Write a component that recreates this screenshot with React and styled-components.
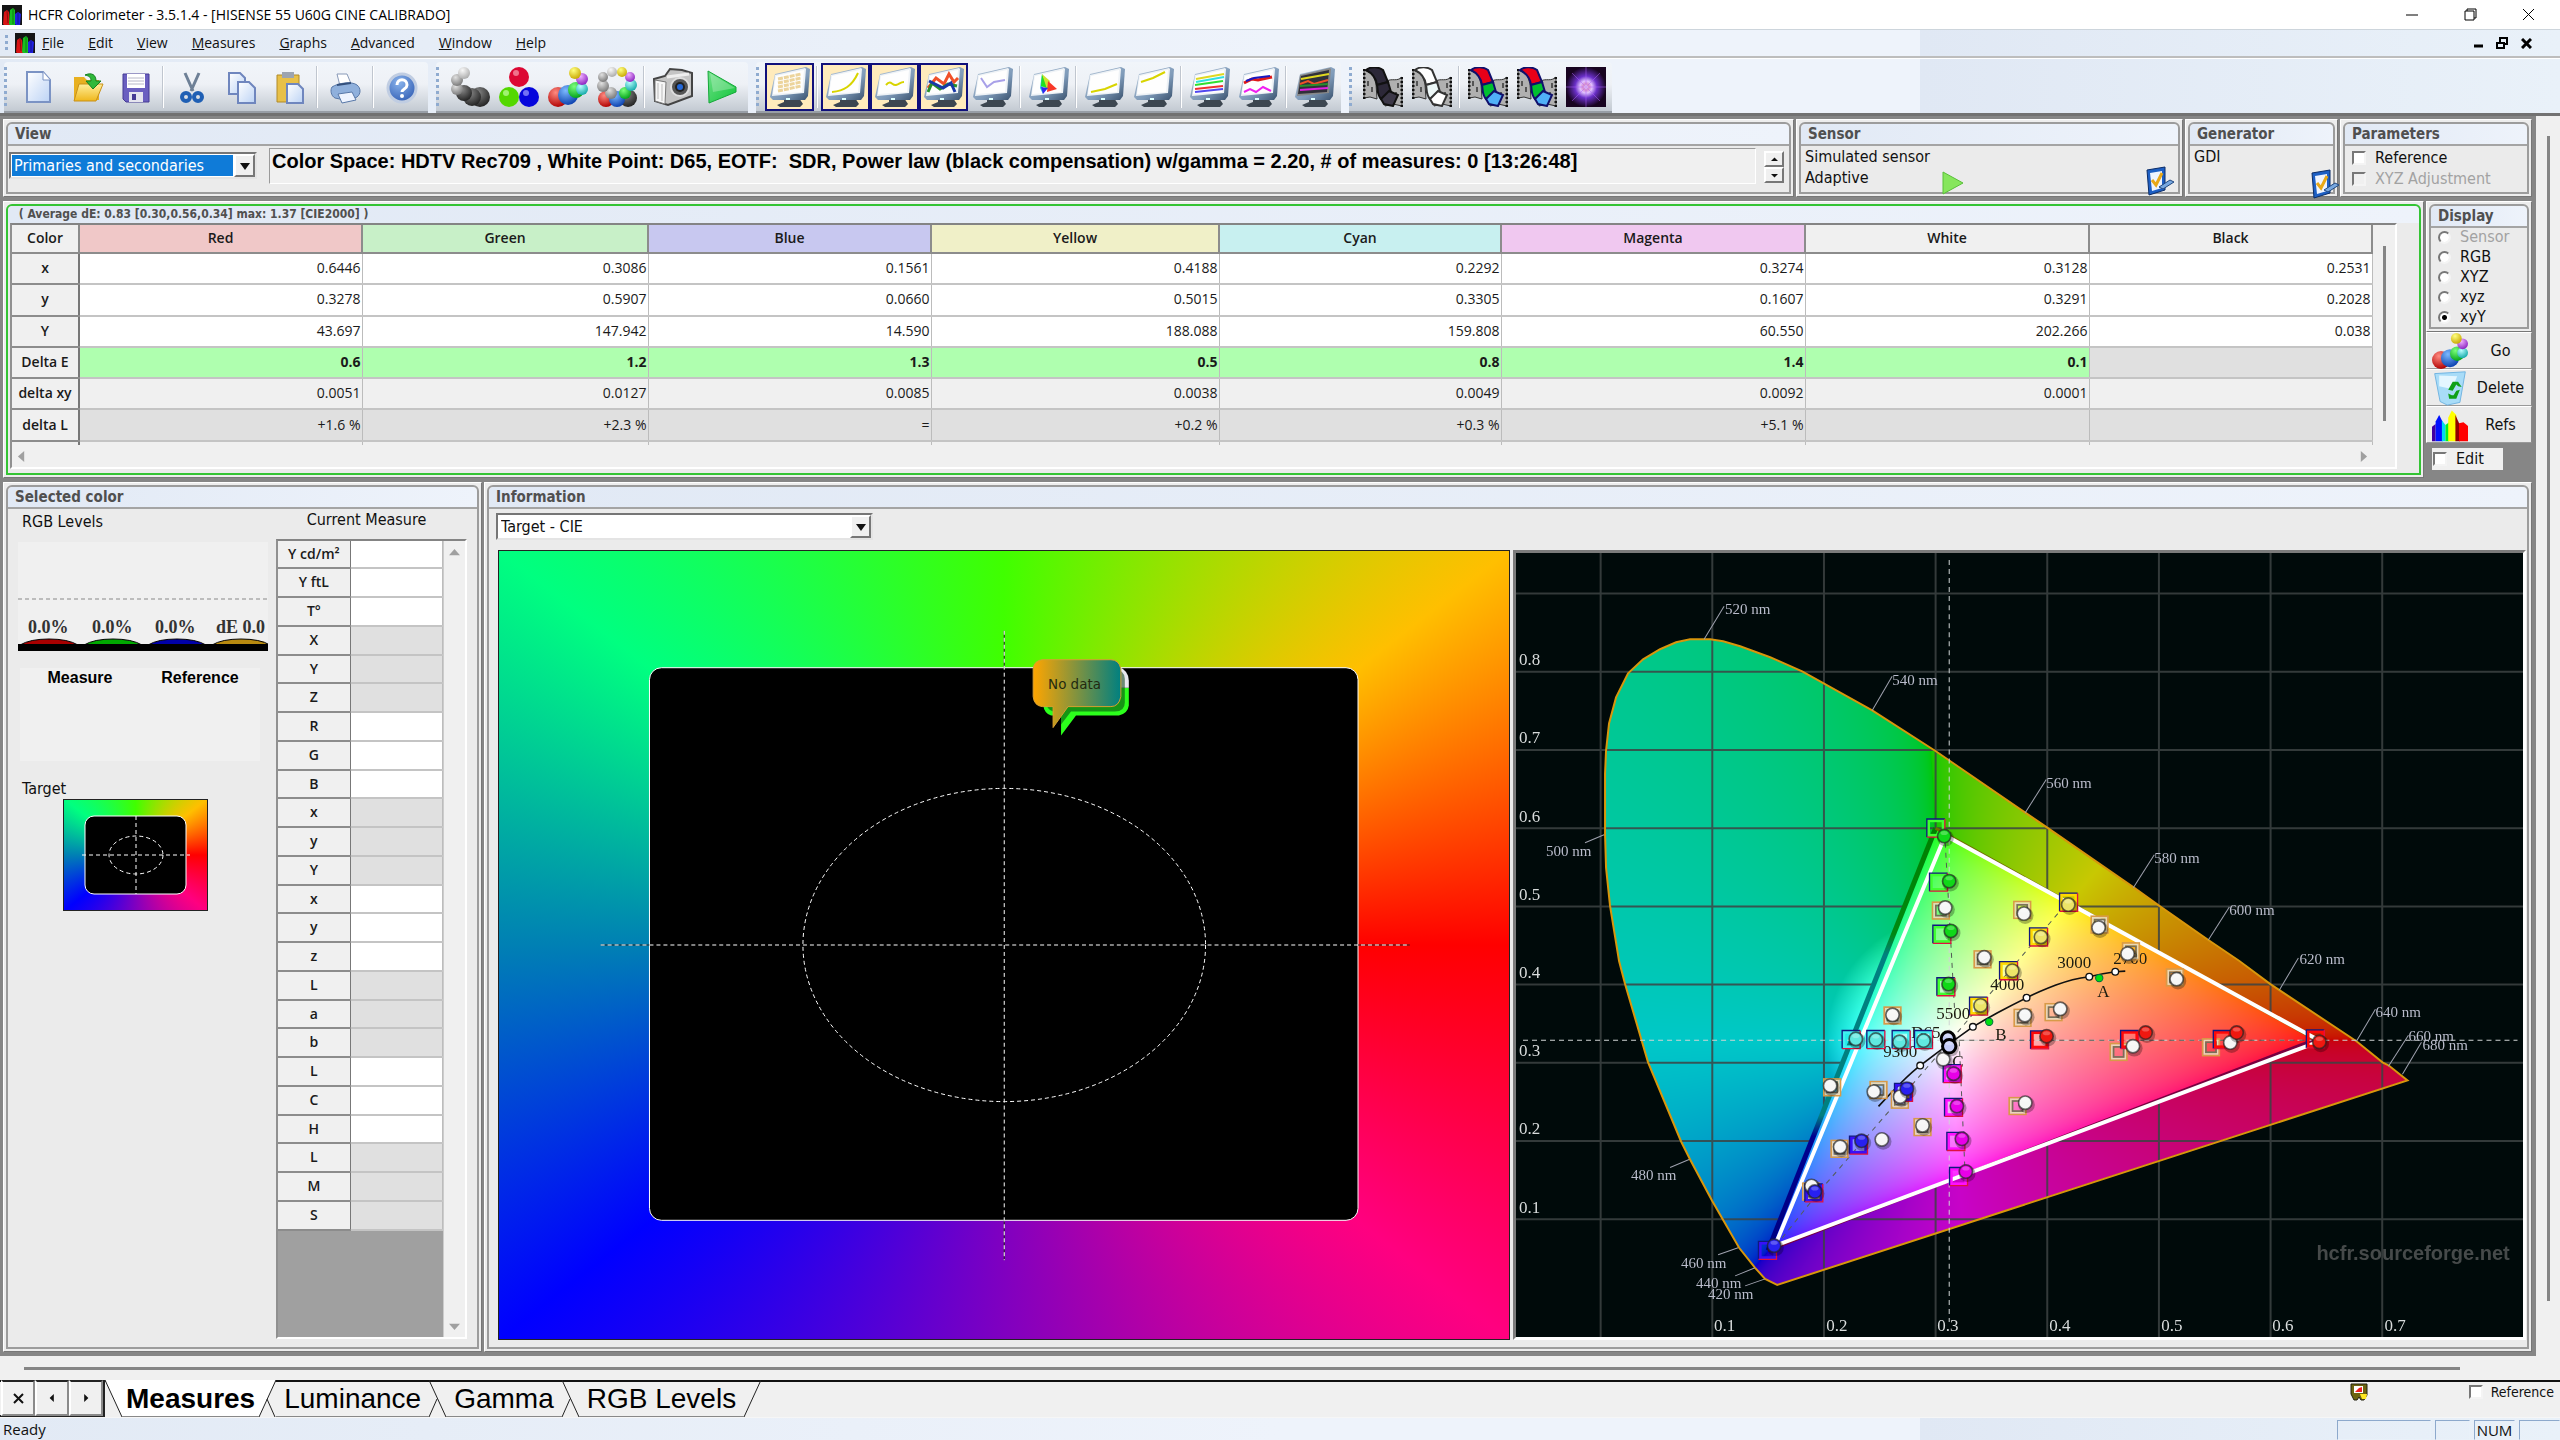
import React, { useLayoutEffect, useRef } from "react";
import styled, { createGlobalStyle, css } from "styled-components";

const ui = '"DejaVu Sans Condensed", "DejaVu Sans", sans-serif';
const segoe = '"Open Sans", "Noto Sans", sans-serif';
const arial = '"Liberation Sans", Arial, sans-serif';
const times = '"Liberation Serif", "Times New Roman", serif';

const band =
  "linear-gradient(to right, #e2eaf5 0, #eef3fb 50%, #eef3fb 75%, #e0e8f4 75%, #e9f1f9 100%)";

const GlobalStyle = createGlobalStyle`
  * { box-sizing: border-box; }
  body { margin: 0; background: #f0f0f0; color: #111; font: 16px ${ui}; }
  button, input, select { font: inherit; color: inherit; margin: 0; }
  svg { display: block; }
`;

/* ---------- window chrome ---------- */

const Window = styled.div`
  display: flex;
  flex-direction: column;
  min-height: 100vh;
`;

const TitleBar = styled.header`
  display: flex;
  align-items: center;
  height: 29px;
  padding: 0 3px 0 2px;
  background: #fff;
  color: #000;
  font: 14px/20px ${segoe};
`;

const Title = styled.h1`
  flex: 1;
  margin: 0;
  padding-left: 6px;
  font: inherit;
`;

const CaptionButton = styled.button`
  display: flex;
  align-items: center;
  justify-content: center;
  width: ${(p) => (p.$small ? "24px" : "58px")};
  height: 24px;
  padding: 0;
  border: 0;
  background: transparent;
`;

const MenuBar = styled.nav`
  display: flex;
  align-items: center;
  height: 29px;
  padding: 0 22px 0 5px;
  border-top: 1px solid #cdd5dc;
  border-bottom: 2px solid #bdbdbd;
  background: ${band};
`;

const MenuItem = styled.button`
  padding: 0 11px;
  margin-right: 2px;
  border: 0;
  background: transparent;
  font: 14px/20px ${segoe};
  &::first-letter { text-decoration: underline; }
`;

const Grip = styled.span`
  width: 3px;
  height: ${(p) => p.$h}px;
  background: repeating-linear-gradient(#8fabd0 0 3px, transparent 3px 6px);
`;

const MenuLogo = styled.span`
  padding: 0 0 0 7px;
  margin-right: -4px;
`;

const Spacer = styled.span`
  flex: 1;
`;

const ToolBars = styled.div`
  display: flex;
  gap: 8px;
  height: 55px;
  padding: 3px 4px 0;
  background: ${band};
  border-top: 1px solid #fff;
`;

const ToolGroup = styled.div`
  display: flex;
  align-items: center;
  padding: 0 2px 0 0;
  border-radius: 4px 4px 0 0;
  border-bottom: 2px solid #989ea6;
  background: linear-gradient(#f1f5fa 0, #eef1f6 45%, #c3cad2 100%);
`;

const ToolGrip = styled(Grip)`
  margin-right: 6px;
`;

const ToolButton = styled.button`
  display: grid;
  place-items: center;
  width: 49px;
  height: 48px;
  padding: 0;
  border: 2px solid ${(p) => (p.$on ? "#10107c" : "transparent")};
  background: ${(p) => (p.$on ? "#ffebbc" : "transparent")};
`;

const ToolSep = styled.span`
  width: 2px;
  height: 42px;
  margin: 0 3px 0 2px;
  background: linear-gradient(to right, #c0c6cf 50%, #fff 50%);
`;

/* ---------- form ---------- */

const Workspace = styled.main`
  display: grid;
  grid-template-columns: minmax(0, 1fr) 24px;
  grid-template-rows: minmax(0, 1fr) 24px;
  flex: 1;
  border-top: 3px solid #727272;
`;

const Form = styled.div`
  display: flex;
  flex-direction: column;
  gap: 4px;
  padding: 3px 4px 4px 3px;
  background: #868686;
`;

const Row = styled.div`
  display: flex;
  gap: 2px;
  ${(p) => p.$grow && "flex: 1;"}
`;

const PanelBox = styled.section`
  display: flex;
  min-width: 0;
  ${(p) => (p.$w ? `width: ${p.$w}px; flex: none;` : "flex: 1;")}
  padding: 2px;
  border: 1px solid;
  border-color: #fff #777 #777 #fff;
  background: #ededed;
`;

const PanelInner = styled.div`
  display: flex;
  flex-direction: column;
  flex: 1;
  min-width: 0;
  border: 2px solid ${(p) => p.$edge || "#9c9c9c"};
  border-radius: 6px 6px 0 0;
  background: #ebebeb;
`;

const PanelTitle = styled.h2`
  margin: 0;
  height: ${(p) => (p.$tight ? 17 : 22)}px;
  padding: 0 7px;
  border-bottom: ${(p) => (p.$tight ? 0 : 2)}px solid #a4a4a4;
  border-radius: 5px 5px 0 0;
  background: linear-gradient(to right, #e1e9f5, #eef3fb);
  color: #505050;
  font: bold ${(p) => (p.$tight ? 12 : 15)}px/${(p) => (p.$tight ? 17 : 20)}px ${ui};
  white-space: pre;
`;

function Panel({ title, width, edge, tight, children }) {
  return (
    <PanelBox $w={width}>
      <PanelInner $edge={edge}>
        <PanelTitle $tight={tight}>{title}</PanelTitle>
        {children}
      </PanelInner>
    </PanelBox>
  );
}

const ViewBody = styled.div`
  display: flex;
  flex: 1;
  padding: 2px 5px 8px 1px;
  gap: 12px;
`;

const SelectBox = styled.div`
  display: grid;
  width: ${(p) => p.$w}px;
  height: 27px;
  margin-top: ${(p) => (p.$top || 0)}px;
  border: 2px solid;
  border-color: #767676 #e4e4e4 #e4e4e4 #767676;
  background: #fff;
  > * { grid-area: 1 / 1; }
`;

const SelectField = styled.select`
  appearance: none;
  min-width: 0;
  margin: 1px 22px 1px 1px;
  padding: 0 2px;
  border: 0;
  border-radius: 0;
  background: ${(p) => (p.$active ? "#0f7bd8" : "#fff")};
  color: ${(p) => (p.$active ? "#fff" : "#111")};
  font: 16px/20px ${ui};
`;

const SelectArrow = styled.span`
  display: grid;
  place-items: center;
  justify-self: end;
  width: 21px;
  background: #f0f0f0;
  border: 2px solid;
  border-color: #fff #777 #777 #fff;
  pointer-events: none;
`;

const InfoLine = styled.p`
  flex: 1;
  min-width: 0;
  margin: 0;
  padding: 0 2px;
  border: 1px solid;
  border-color: #9a9a9a #fff #fff #9a9a9a;
  background: #f0f0f0;
  color: #000;
  font: bold 20px/24px ${arial};
  white-space: pre;
`;

const Spin = styled.div`
  display: flex;
  flex-direction: column;
  padding-top: 3px;
  margin-left: -4px;
`;

const SpinButton = styled.button`
  display: grid;
  place-items: center;
  width: 20px;
  height: 16px;
  padding: 0;
  border: 2px solid;
  border-color: #fff #777 #777 #fff;
  background: #f0f0f0;
`;

const DeviceBody = styled.div`
  display: grid;
  grid-template-columns: 1fr auto auto;
  align-items: end;
  flex: 1;
  padding: 0 5px 0 4px;
`;

const DeviceText = styled.p`
  margin: 0;
  align-self: start;
  font: 16px/21px ${ui};
`;

const IconButton = styled.button`
  width: ${(p) => p.$w}px;
  height: 30px;
  margin: 0 0 -${(p) => p.$drop || 4}px;
  padding: 0;
  border: 0;
  background: transparent;
`;

const PlayButton = styled(IconButton)`
  height: 26px;
  margin-right: 178px;
`;

const CheckList = styled.div`
  display: flex;
  flex-direction: column;
  padding: 1px 7px 3px;
`;

const Option = styled.label`
  display: flex;
  align-items: center;
  gap: ${(p) => p.$gap || 9}px;
  color: ${(p) => (p.$off ? "#a2a2a2" : "#111")};
  font: 16px/${(p) => p.$lh || 21}px ${ui};
`;

const Check = styled.input`
  appearance: none;
  width: 14px;
  height: 14px;
  border: 2px solid;
  border-color: #777 #f4f4f4 #f4f4f4 #777;
  background: ${(p) => (p.disabled ? "#f0f0f0" : "#fff")};
`;

const Radio = styled(Check)`
  width: 13px;
  height: 13px;
  border-radius: 50%;
  background: #fff;
  background-clip: padding-box;
  &:checked { background: radial-gradient(circle, #000 0 2px, #fff 3px); }
`;

/* ---------- measures table ---------- */

const TableBody = styled.div`
  display: flex;
  flex: 1;
  padding: 0 22px 4px 2px;
`;

const TableFrame = styled.div`
  display: grid;
  grid-template-columns: minmax(0, 1fr) 22px;
  grid-template-rows: 220px 22px;
  flex: 1;
  min-width: 0;
  border: 2px solid;
  border-color: #848484 #fff #fff #909090;
  background: #f0f0f0;
`;

const Clip = styled.div`
  overflow: hidden;
`;

const Table = styled.table`
  width: 100%;
  table-layout: fixed;
  border-collapse: collapse;
  font: 14px/20px ${segoe};
  color: #1a1a1a;
`;

const MainTable = styled(Table)`
  height: 248px;
`;

const HeadCell = styled.th`
  height: 28px;
  padding: 0 0 1px;
  border-right: 2px solid #8c8c8c;
  border-bottom: 2px solid #8c8c8c;
  background: ${(p) => p.$bg || "#f0f0f0"};
  font-weight: 600;
`;

const SideCell = styled.th`
  height: 31px;
  padding: 0 0 1px;
  border-right: 2px solid #777;
  border-bottom: 2px solid #8c8c8c;
  background: #f0f0f0;
  font-weight: 600;
`;

const Cell = styled.td`
  height: 31px;
  padding: 0 1px 1px 0;
  border-right: 1px solid #bcbcbc;
  border-bottom: 2px solid #c4c4c4;
  text-align: right;
  background: ${(p) => p.$bg};
  font-weight: ${(p) => (p.$strong ? 700 : 400)};
`;

const ScrollTrack = styled.div`
  display: flex;
  align-items: center;
  justify-content: ${(p) => p.$justify || "center"};
  ${(p) => p.$column && "flex-direction: column;"}
  padding: ${(p) => p.$pad || "0"};
  background: #f0f0f0;
`;

const Thumb = styled.span`
  align-self: ${(p) => (p.$v ? "stretch" : "center")};
  ${(p) => (p.$v ? "width: 3px;" : "height: 3px; flex: 1;")}
  background: #858585;
`;

const DisplayColumn = styled.div`
  display: flex;
  flex-direction: column;
  width: 106px;
`;

const RadioList = styled.div`
  display: flex;
  flex-direction: column;
  margin-top: -1px;
  padding: 0 0 1px 7px;
`;

const DisplayPanel = styled.div`
  display: flex;
  height: 131px;
`;

const SideButton = styled.button`
  display: grid;
  grid-template-columns: 39px 1fr;
  align-items: center;
  height: 37px;
  padding: 0 1px 0 5px;
  border: 1px solid;
  border-color: #fff #888 #999 #fff;
  background: #ebebeb;
  font: 16px/20px ${ui};
  text-align: center;
`;

const EditOption = styled(Option)`
  width: 71px;
  margin: 5px 0 0 6px;
  padding-left: 1px;
  background: #f0f0f0;
`;

/* ---------- selected colour ---------- */

const SelectedBody = styled.div`
  display: grid;
  grid-template-columns: 250px 191px;
  column-gap: 8px;
  flex: 1;
  padding: 0 10px 8px 10px;
`;

const LeftStack = styled.div`
  display: flex;
  flex-direction: column;
  align-items: flex-start;
`;

const Caption = styled.h3`
  margin: ${(p) => p.$m || "0"};
  padding: 0 4px;
  font: 16px/20px ${ui};
`;

const CompareBox = styled.div`
  display: grid;
  grid-template-columns: 1fr 1fr;
  width: 240px;
  height: 93px;
  margin: 17px 0 0 2px;
  background: #f0f0f0;
  color: #000;
  font: bold 16px/20px ${arial};
  text-align: center;
`;

const MeasureStack = styled.div`
  display: flex;
  flex-direction: column;
`;

const MeasureTitle = styled.h3`
  margin: 0 10px 9px 0;
  font: 16px/21px ${ui};
  text-align: center;
`;

const GridFrame = styled.div`
  display: grid;
  grid-template-columns: minmax(0, 1fr) 22px;
  flex: 1;
  border: 2px solid;
  border-color: #848484 #fff #fff #909090;
  background: #a0a0a0;
`;

const MeasureTable = styled(Table)`
  height: 690px;
`;

const MiniHead = styled(SideCell)`
  height: auto;
  border-right-width: 1px;
  line-height: 18px;
`;

const MiniCell = styled(Cell)`
  height: auto;
`;

const ArrowTrack = styled(ScrollTrack)`
  border-left: 1px solid #ccc;
`;

/* ---------- information ---------- */

const InfoBody = styled.div`
  display: flex;
  flex-direction: column;
  flex: 1;
  padding: 4px 1px 7px 7px;
  gap: 10px;
`;

const Views = styled.div`
  display: flex;
  flex: 1;
  gap: 3px;
  padding-left: 2px;
`;

const TargetView = styled.div`
  position: relative;
  ${(p) =>
    p.$mini
      ? css`
          width: 145px;
          height: 112px;
          margin: 0 0 0 45px;
        `
      : css`
          flex: 1014;
        `}
  border: 1px solid #222;
  background: conic-gradient(
    #40ff00 0deg, #ffbf00 52deg, #ff0000 90deg, #ff0080 128deg,
    #8000c0 180deg, #0000ff 232deg, #0080b4 270deg, #00ff80 308deg, #40ff00 360deg
  );
  > svg { position: absolute; inset: 0; width: 100%; height: 100%; }
`;

const CieView = styled.div`
  position: relative;
  flex: 1012;
  min-width: 0;
  border: 3px solid;
  border-color: #7c7c7c #fff #fff #7c7c7c;
  background: #000a0a;
  > * { position: absolute; inset: 0; width: 100%; height: 100%; }
  svg text { font-family: ${times}; }
`;

const Axis = styled.text`
  font-size: 17px;
  fill: #d8dcdc;
`;
const Wave = styled.text`
  font-size: 15px;
  fill: #b9bccb;
`;
const Kelvin = styled.text`
  font-size: 17px;
  fill: #1c1c10;
`;
const Credit = styled.text`
  && { font-family: ${arial}; }
  font-size: 20px;
  font-weight: bold;
  fill: #464a4a;
`;
const BubbleText = styled.text`
  font: 15px ${ui};
  fill: #222a10;
`;
const LevelText = styled.text`
  font: bold 18px ${times};
  fill: #333;
`;

/* ---------- bottom ---------- */

const Sheets = styled.nav`
  display: flex;
  height: 38px;
  padding-right: 6px;
  border-bottom: 1px solid #f6f6f6;
  background: linear-gradient(#111 0 2px, #f0f0f0 2px);
`;

const SheetArrow = styled.button`
  width: 34px;
  height: 36px;
  padding: 0;
  display: grid;
  place-items: center;
  border: 2px solid;
  border-color: #222 #8a8a8a #8a8a8a #fff;
  background: #f0f0f0;
`;

const ArrowSet = styled.div`
  display: flex;
  padding-left: 1px;
  border-right: 2px solid #222;
  border-bottom: 2px solid #222;
  height: 37px;
`;

const Sheet = styled.button`
  height: 37px;
  padding: 0 ${(p) => (p.$on ? 4 : 8)}px;
  border: 0;
  border-bottom: 1px solid #888;
  border-top: 2px solid ${(p) => (p.$on ? "#fff" : "#111")};
  background: ${(p) => (p.$on ? "#fff" : "transparent")};
  color: #000;
  font: ${(p) => (p.$on ? "bold" : "normal")} 28px/32px ${arial};
`;

const SheetTools = styled.div`
  display: flex;
  align-items: flex-start;
  gap: 100px;
  padding-top: 3px;
`;

const SmallOption = styled(Option)`
  font-size: 14px;
  line-height: 18px;
`;

const StatusBar = styled.footer`
  display: flex;
  gap: 4px;
  height: 22px;
  padding-left: 3px;
  background: ${band};
  font: 15px/22px ${segoe};
`;

const Pane = styled.span`
  width: ${(p) => p.$w}px;
  margin-top: 2px;
  border: 1px solid;
  border-color: #8da9cc #e9f1f9 #e9f1f9 #8da9cc;
  text-align: center;
  line-height: 19px;
`;

/* ---------- icons ---------- */

const Tri = ({ d, w = 10, h = 10, fill = "#111" }) => (
  <svg width={w} height={h} viewBox="0 0 10 10" preserveAspectRatio="none">
    <path d={d} fill={fill} />
  </svg>
);
const UP = "M0 8L5 1L10 8Z";
const DOWN = "M0 2L5 9L10 2Z";
const LEFT = "M8 0L1 5L8 10Z";
const RIGHT = "M2 0L9 5L2 10Z";

const Logo = ({ size = 20 }) => (
  <svg width={size} height={size} viewBox="0 0 20 20">
    <rect width="20" height="20" fill="#151515" />
    <path d="M1 19l1-12 3-2 2 2 1 13H2z" fill="#d81414" />
    <path d="M7 19l1-14 3-2 2 2 0 15H8z" fill="#18c020" />
    <path d="M13 19V9l3-2 3 2-1 11h-4z" fill="#2020e0" />
    <path d="M5 6l1 12M11 4v15M16 8v11" stroke="#000" opacity=".35" />
  </svg>
);

const Defs = () => (
  <svg width="0" height="0" style={{ position: "absolute" }} aria-hidden="true">
    <defs>
      {[
        ["grey", "#888", "#222"], ["lgrey", "#e0e0e0", "#777"], ["pale", "#f8f8f8", "#aaa"],
        ["red", "#ff8a80", "#b00000"], ["blue", "#7dbaff", "#0a3fae"], ["green", "#7cff7c", "#00a018"],
        ["cyan", "#b8ffff", "#10a8a8"], ["violet", "#f0b0ff", "#8a22c0"], ["gold", "#ffff80", "#c8a800"],
      ].map(([id, a, b]) => (
        <radialGradient key={id} id={"s-" + id} cx=".38" cy=".28" r=".75">
          <stop offset="0" stopColor={a} />
          <stop offset="1" stopColor={b} />
        </radialGradient>
      ))}
      <linearGradient id="bezel" x1="0" y1="0" x2="1" y2="1">
        <stop offset="0" stopColor="#b9c9da" />
        <stop offset=".6" stopColor="#7d99b8" />
        <stop offset="1" stopColor="#38506c" />
      </linearGradient>
      <linearGradient id="paper" x1="0" y1="0" x2="1" y2="1">
        <stop offset="0" stopColor="#fff" />
        <stop offset="1" stopColor="#bcd3f5" />
      </linearGradient>
      <linearGradient id="play" x1="0" y1="0" x2="1" y2="1">
        <stop offset="0" stopColor="#6fe088" />
        <stop offset="1" stopColor="#12c53a" />
      </linearGradient>
      <linearGradient id="folder" x1="0" y1="0" x2="0" y2="1">
        <stop offset="0" stopColor="#ffee9a" />
        <stop offset="1" stopColor="#efb71c" />
      </linearGradient>
      <radialGradient id="help" cx=".4" cy=".3" r=".8">
        <stop offset="0" stopColor="#8ab4ec" />
        <stop offset="1" stopColor="#2c58b0" />
      </radialGradient>
      <radialGradient id="nova">
        <stop offset="0" stopColor="#fff" />
        <stop offset=".15" stopColor="#d890c8" />
        <stop offset=".3" stopColor="#e0c0ff" />
        <stop offset=".55" stopColor="#6a30c8" />
        <stop offset="1" stopColor="#180420" />
      </radialGradient>
    </defs>
  </svg>
);

const Icon = ({ children, size = 40 }) => (
  <svg width={size} height={size} viewBox="0 0 40 40">{children}</svg>
);

const Balls = ({ list }) =>
  list.map(([x, y, r, c], i) => <circle key={i} cx={x} cy={y} r={r} fill={`url(#s-${c})`} />);

const colorBalls = [
  [10, 30, 10, "red"], [20, 28, 10, "blue"], [28, 23, 8, "green"], [34, 22, 6, "cyan"], [34, 12, 6, "violet"], [27, 6, 6, "gold"],
];

const Monitor = ({ children, dark }) => (
  <Icon>
    <path d="M14 31h15l4 6-3 3H10l-3-2 7-3z" fill="#3c4650" />
    <path d="M5 7L36 0l4 2-2 27-3 4H3l-3-3z" fill="url(#bezel)" />
    <path d="M5 8L35 1l1 1-2 24-32 3z" fill={dark ? "#888" : "#eef2f6"} />
    <path d="M6 9L34 3l-2 22-29 2z" fill={dark ? "#30303a" : "#fefefe"} />
    <path d="M16 32h4" stroke="#dff" strokeWidth="2" />
    {children}
  </Icon>
);

const L = ({ d, c, w = 2 }) => <path d={d} stroke={c} strokeWidth={w} fill="none" />;

const Film = ({ colors, stroke }) => (
  <Icon>
    <path d="M1 3l9 4 3 10 1 15-7-2-6 1z" fill="#b0b0b0" stroke="#333" />
    <path d="M24 14c5-3 10 1 15-4v29l-9-2-8 2z" fill="#b0b0b0" stroke="#333" />
    <path d="M1 2v30M39 10v30" stroke="#111" strokeWidth="3" strokeDasharray="2 2" />
    <path d="M5 14v5M9 20v5M35 16v5M33 25v5" stroke="#555" strokeWidth="2" />
    <path d="M3 3C8-1 16 0 20 3L25 15 14 18C13 11 9 6 3 3Z" fill={colors[0]} stroke={stroke} strokeWidth="2" />
    <path d="M14 18L25 15 28 25 18 32C14 28 15 23 14 18Z" fill={colors[1]} stroke={stroke} strokeWidth="2" />
    <path d="M18 32L26 24 35 28 30 39 21 37Z" fill={colors[2]} stroke={stroke} strokeWidth="2" />
  </Icon>
);

const icons = {
  New: <Icon><path d="M9 5h16l7 8v22H9z" fill="url(#paper)" stroke="#7b93c4" strokeWidth="2" /><path d="M25 5v8h7" fill="#fff" stroke="#7b93c4" /></Icon>,
  Open: <Icon><path d="M7 10h10l3 3h12v20H7z" fill="#e8b020" /><path d="M12 17h24l-7 17H7z" fill="url(#folder)" stroke="#c89018" /><path d="M18 8c7-3 11 0 11 6h5l-8 8-7-8h5c0-4-2-5-6-6z" fill="#2fb83a" stroke="#168020" /></Icon>,
  Save: <Icon><path d="M7 7h26v28H10l-3-3z" fill="#6a5fc0" stroke="#453a94" /><path d="M11 7h18v14H11z" fill="#fff" /><path d="M12 11h16M12 14h16M12 17h16" stroke="#b8b8c8" /><path d="M13 25h14v10H13z" fill="#e4e4ee" /><path d="M16 27h4v6h-4z" fill="#453a94" /></Icon>,
  Cut: <Icon><path d="M13 6l8 18M27 6l-8 18" stroke="#6e8096" strokeWidth="3" /><circle cx="14" cy="30" r="4" fill="none" stroke="#1f5fb4" strokeWidth="4" /><circle cx="26" cy="30" r="4" fill="none" stroke="#1f5fb4" strokeWidth="4" /></Icon>,
  Copy: <Icon><path d="M8 6h11l5 5v16H8z" fill="url(#paper)" stroke="#6f86be" strokeWidth="2" /><path d="M17 15h11l6 6v15H17z" fill="url(#paper)" stroke="#6f86be" strokeWidth="2" /></Icon>,
  Paste: <Icon><path d="M7 8h22v27H7z" fill="#e8c048" stroke="#b08a28" /><path d="M12 5h12v6H12z" fill="#9ca4b0" /><path d="M17 17h11l5 5v14H17z" fill="url(#paper)" stroke="#6f86be" strokeWidth="2" /></Icon>,
  Print: <Icon><path d="M11 7h10l5 12H14z" fill="#fff" stroke="#8899b8" /><path d="M6 20c6-4 20-6 25-2 4 3 4 9 0 12l-8 4-14-3c-4-2-5-8-3-11z" fill="#8fb0dc" stroke="#5878a8" /><path d="M11 18l14-2" stroke="#34507c" strokeWidth="2" /><path d="M12 27l14-2 4 8-14 3z" fill="#eef4ff" stroke="#5878a8" /></Icon>,
  Help: <Icon><circle cx="20" cy="21" r="14" fill="url(#help)" stroke="#c0cde2" strokeWidth="3" /><path d="M15 18c0-7 10-7 10 0 0 4-5 4-5 7" fill="none" stroke="#fff" strokeWidth="3" /><circle cx="20" cy="29" r="2" fill="#fff" /></Icon>,
  Greys: <Icon><Balls list={[[30, 30, 10, "grey"], [22, 30, 9, "grey"], [14, 26, 8, "grey"], [7, 22, 6, "lgrey"], [7, 13, 6, "lgrey"], [14, 6, 6, "pale"]]} /></Icon>,
  Primaries: <Icon><circle cx="20" cy="10" r="10" fill="#dc0834" /><circle cx="10" cy="30" r="10" fill="#54d800" /><circle cx="30" cy="30" r="10" fill="#0606dc" /><circle cx="17" cy="6" r="3" fill="#f8a0b0" opacity=".7" /><circle cx="7" cy="26" r="3" fill="#c0ffa0" opacity=".7" /><circle cx="27" cy="26" r="3" fill="#a0a0ff" opacity=".7" /></Icon>,
  Secondaries: <Icon><Balls list={colorBalls} /></Icon>,
  All: <Icon><Balls list={[[9, 32, 8, "red"], [31, 31, 9, "grey"], [20, 32, 8, "blue"], [14, 26, 6, "lgrey"], [28, 26, 6, "green"], [6, 19, 6, "lgrey"], [34, 18, 6, "cyan"], [6, 10, 5, "lgrey"], [33, 10, 5, "violet"], [15, 5, 5, "pale"], [25, 5, 5, "gold"]]} /></Icon>,
  Capture: <Icon><path d="M1 12l11-3 5-7 12 1 10 3v23l-24 9-13-4z" fill="#c4c4c4" stroke="#444" strokeWidth="2" /><path d="M2 13l11 2-1 22L2 34z" fill="#f6f6f6" stroke="#777" /><path d="M5 16v16M9 17v17" stroke="#bbb" /><path d="M14 10l22-3" stroke="#eee" strokeWidth="3" /><circle cx="27" cy="20" r="9" fill="#555" stroke="#ddd" strokeWidth="2" /><circle cx="27" cy="20" r="5" fill="#222" /><circle cx="27" cy="20" r="3" fill="#2468d8" /></Icon>,
  Run: <Icon><path d="M6 4l28 16v5L7 36z" fill="url(#play)" stroke="#14a838" /><path d="M8 6l25 15-22 4z" fill="#fff" opacity=".25" /></Icon>,
  Table: <Monitor>{[11, 15, 19, 23].map((y) => <path key={y} d={`M8 ${y + 1}l23-5`} stroke="#ecd49c" strokeWidth="3" strokeDasharray="5 1" />)}</Monitor>,
  Luminance: <Monitor><L d="M6 25c12-1 20-6 26-19" c="#d8d400" /></Monitor>,
  GammaView: <Monitor><L d="M11 18c5-6 6 1 10 0s4-3 8-3" c="#d8d400" /></Monitor>,
  RGB: <Monitor><L d="M4 21l8-10 8 6 5-10 5 8 4-4" c="#f05028" w={3} /><L d="M4 25l4-9 8 6 8-5 9 2" c="#28902c" w={3} /><L d="M5 14l8 4 6 3 8-5 4 9" c="#1838a8" w={3} /></Monitor>,
  Temp: <Monitor><L d="M8 11l6 9 7-5 11-2" c="#a8a0e8" /></Monitor>,
  CIE: <Monitor><path d="M13 7l-2 14 3 6z" fill="#20c8e0" /><path d="M13 7l-1 12 8 3z" fill="#20e020" /><path d="M13 7l8 7-3 8z" fill="#d0e030" /><path d="M19 14l9 8-10 3z" fill="#f83828" /><path d="M12 20l7 1-5 6z" fill="#3028f0" /></Monitor>,
  Near0: <Monitor><L d="M6 25l14-3 12-5" c="#d8d400" /></Monitor>,
  Near100: <Monitor><L d="M7 15l12-4 12-6" c="#d8d400" /></Monitor>,
  Sat: <Monitor><L d="M6 12l28-5" c="#e0d820" /><L d="M6 15l28-5" c="#30e0e0" /><L d="M5 18l28-4" c="#30e030" /><L d="M5 22l28-3" c="#f03030" /><L d="M5 25l28-3" c="#5048f0" /></Monitor>,
  SatShift: <Monitor><L d="M5 16l8-4 6 1 14-3" c="#e01818" w={3} /><L d="M7 14l8-3 16-2" c="#1818c0" /><L d="M5 25l6-3 6 3 7-5 8 4" c="#f020f0" /></Monitor>,
  Combo: <Monitor dark><L d="M6 12l28-5" c="#e0d820" /><L d="M5 17l8-3 6 3 14-4" c="#f05028" /><L d="M5 19l28-2" c="#28902c" /><L d="M5 23l28-2" c="#e020e0" /></Monitor>,
  FilmDark: <Film colors={["#2c2838", "#2c2838", "#3c3848"]} stroke="#111" />,
  FilmLight: <Film colors={["#fff", "#eef8f8", "#fff"]} stroke="#333" />,
  FilmRgb: <Film colors={["#e80018", "#00c030", "#50b0f8"]} stroke="#10106c" />,
  FilmRgb2: <Film colors={["#e80018", "#00c030", "#50b0f8"]} stroke="#10106c" />,
  Nova: <Icon><rect width="40" height="40" fill="#180420" /><rect width="40" height="40" fill="url(#nova)" /><path d="M20 0v40M0 20h40M6 6l28 28M34 6L6 34" stroke="#b060ff" opacity=".5" /></Icon>,
};

const toolbars = [
  ["New", "Open", "Save", "|", "Cut", "Copy", "Paste", "|", "Print", "|", "Help"],
  ["Greys", "Primaries", "Secondaries", "All", "|", "Capture", "Run"],
  ["Table", "|", "Luminance", "GammaView", "RGB", "Temp", "|", "CIE", "|", "Near0", "Near100", "|", "Sat", "SatShift", "|", "Combo"],
  ["FilmDark", "FilmLight", "|", "FilmRgb", "FilmRgb2", "Nova"],
];
const pressed = ["Table", "Luminance", "GammaView", "RGB"];

const SetupIcon = () => (
  <svg width="30" height="30" viewBox="0 0 30 30">
    <path d="M2 4l18-3v23L4 29z" fill="#1d5fc4" stroke="#0a2c68" />
    <path d="M5 7l12-2v17L7 25z" fill="#eef4ff" />
    <path d="M7 14l4 5 6-12" fill="none" stroke="#e8a818" strokeWidth="3" />
    <path d="M14 21l11-7 4 2-11 7z" fill="#78a8e0" stroke="#204880" />
  </svg>
);

/* ---------- data ---------- */

const columns = [
  ["Red", "#f0c8c8", 283], ["Green", "#c8f0c8", 286], ["Blue", "#c8c8f0", 283], ["Yellow", "#f0f0c8", 288],
  ["Cyan", "#c8f0f0", 282], ["Magenta", "#f0c8f0", 304], ["White", "#f0f0f0", 284], ["Black", "#f0f0f0", 283],
];

const rows = [
  ["x", "#fff", "0.6446 0.3086 0.1561 0.4188 0.2292 0.3274 0.3128 0.2531"],
  ["y", "#fff", "0.3278 0.5907 0.0660 0.5015 0.3305 0.1607 0.3291 0.2028"],
  ["Y", "#fff", "43.697 147.942 14.590 188.088 159.808 60.550 202.266 0.038"],
  ["Delta E", "#afffaf", "0.6 1.2 1.3 0.5 0.8 1.4 0.1 "],
  ["delta xy", "#f0f0f0", "0.0051 0.0127 0.0085 0.0038 0.0049 0.0092 0.0001 "],
  ["delta L", "#e0e0e0", "+1.6_% +2.3_% = +0.2_% +0.3_% +5.1_%  "],
  ["", "#f0f0f0", "       "],
];

const measureRows = ["Y cd/m²", "Y ftL", "T°", "X", "Y", "Z", "R", "G", "B", "x", "y", "Y", "x", "y", "z", "L", "a", "b", "L", "C", "H", "L", "M", "S"];

/* ---------- chromaticity chart ---------- */

const locus = [
  [1778, 1283], [1766, 1277], [1756, 1266], [1740, 1246], [1713, 1199], [1691, 1158], [1682, 1140], [1649, 1061], [1626, 983],
  [1620, 960], [1611, 905], [1607, 867], [1606, 834], [1606, 773], [1607, 750], [1610, 723], [1617, 697], [1629, 673],
  [1644, 659], [1661, 649], [1677, 642], [1691, 639], [1711, 639], [1724, 641], [1741, 646], [1771, 657], [1803, 671],
  [1873, 710], [1937, 751], [2026, 812], [2048, 827], [2135, 887], [2160, 905], [2209, 939], [2240, 960], [2271, 983],
  [2280, 989], [2357, 1040], [2383, 1061], [2389, 1064], [2408, 1079],
];
const ORIGIN = [1517, 553];
const SIZE = [1007, 782];
const px = (x) => 1601.6 + 1116 * x;
const py = (y) => 1295.5 - 780 * y;

const primaries = [[0.64, 0.33], [0.3, 0.6], [0.15, 0.06]];
const whitePoint = [0.3127, 0.329];

function rgbOf(x, y) {
  const z = 1 - x - y;
  return [
    Math.max(0, 3.2406 * x - 1.5372 * y - 0.4986 * z),
    Math.max(0, -0.9689 * x + 1.8758 * y + 0.0415 * z),
    Math.max(0, 0.0557 * x - 0.204 * y + 1.057 * z),
  ];
}

/* Distance along the ray from the white point at which the gamut edge is crossed. */
function edgeHit(dx, dy) {
  let best = Infinity;
  for (let i = 0; i < 3; i++) {
    const a = primaries[i];
    const b = primaries[(i + 1) % 3];
    const ex = b[0] - a[0];
    const ey = b[1] - a[1];
    const det = dx * ey - dy * ex;
    if (Math.abs(det) < 1e-12) continue;
    const ax = a[0] - whitePoint[0];
    const ay = a[1] - whitePoint[1];
    const s = (ax * ey - ay * ex) / det;
    const t = (ax * dy - ay * dx) / det;
    if (s > 0 && t >= -1e-9 && t <= 1 + 1e-9 && s < best) best = s;
  }
  return best;
}

function paintLocus(canvas) {
  const ctx = canvas.getContext("2d");
  const img = ctx.createImageData(SIZE[0], SIZE[1]);
  for (let j = 0; j < SIZE[1]; j++) {
    for (let i = 0; i < SIZE[0]; i++) {
      let x = (i + ORIGIN[0] - 1601.6) / 1116;
      let y = (1295.5 - j - ORIGIN[1]) / 780;
      const dx = x - whitePoint[0];
      const dy = y - whitePoint[1];
      const s = edgeHit(dx, dy);
      let top = 255;
      let glow = 0;
      if (s < 1) {
        x = whitePoint[0] + dx * s;
        y = whitePoint[1] + dy * s;
        top = 200;
        glow = Math.max(0, 1 - Math.hypot(dx * 1116, dy * 780) / 124);
      }
      const c = rgbOf(x, y);
      const m = Math.max(c[0], c[1], c[2]);
      const k = (j * SIZE[0] + i) * 4;
      for (let n = 0; n < 3; n++) {
        img.data[k + n] = top * Math.pow(c[n] / m, 1 / 2.2) + glow * 220;
      }
      img.data[k + 3] = 255;
    }
  }
  ctx.putImageData(img, 0, 0);
  ctx.globalCompositeOperation = "destination-in";
  ctx.beginPath();
  locus.forEach(([x, y]) => ctx.lineTo(x - ORIGIN[0], y - ORIGIN[1]));
  ctx.closePath();
  ctx.fill();
}

const waves = [
  [520, 1726, 614, 1705, 639, 1725, 606], [540, 1893, 685, 1873, 710, 1893, 676], [560, 2047, 787, 2026, 812, 2047, 779],
  [580, 2155, 862, 2134, 887, 2155, 854], [600, 2230, 914, 2209, 939, 2230, 906], [620, 2300, 963, 2280, 989, 2299, 957],
  [640, 2376, 1016, 2357, 1040, 2376, 1008], [660, 2409, 1040, 2389, 1065, 2409, 1034], [680, 2423, 1049, 2403, 1073, 2422, 1041],
  [500, 1547, 855, 1605, 834, 1586, 842], [480, 1632, 1178, 1690, 1158, 1671, 1166], [460, 1682, 1266, 1739, 1246, 1719, 1253],
  [440, 1697, 1286, 1756, 1266, 1736, 1274], [420, 1709, 1297, 1766, 1277, 1746, 1284],
];

const kelvins = [
  ["3000", 2058, 967], ["2700", 2114, 963], ["A", 2098, 996], ["4000", 1991, 989], ["5500", 1937, 1018],
  ["B", 1996, 1039], ["9300", 1884, 1056], ["D65", 1912, 1037], ["C", 1953, 1066],
];

/* Target squares and measured points, in thirds of a pixel from the chart's inner corner. */
const squares = {
  none: [[575, 329], [819, 327], [1051, 371], [1145, 451], [1277, 529], [700, 475], [430, 643], [820, 650], [913, 633], [1108, 752], [1385, 738], [249, 858], [388, 866], [452, 895], [520, 977], [271, 1042], [805, 914], [186, 1170]],
  "#40ff30": [[560, 82], [568, 244], [578, 400], [590, 557]],
  "#ffd800": [[958, 304], [868, 408], [778, 509], [688, 615]],
  "#ff0808": [[871, 716], [1141, 715], [1419, 715], [1698, 713]],
  "#40f0f0": [[306, 715], [380, 715], [456, 715], [523, 715]],
  "#ff10ff": [[609, 817], [613, 918], [620, 1020], [628, 1125]],
  "#3810f8": [[463, 873], [328, 1031], [194, 1174], [55, 1346]],
};
const points = {
  "#f6f6f6": [[582, 774], [588, 320], [824, 338], [1048, 380], [1135, 458], [1282, 534], [705, 469], [430, 641], [827, 642], [933, 623], [1151, 735], [1443, 724], [243, 853], [374, 871], [453, 886], [520, 972], [273, 1036], [398, 1014], [828, 904], [187, 1153]],
  "#10d818": [[585, 106], [600, 241], [605, 390], [598, 549]],
  "#ece468": [[957, 311], [875, 408], [789, 509], [694, 613]],
  "#f01810": [[892, 705], [1189, 694], [1462, 694], [1710, 722]],
  "#60e8e0": [[320, 713], [380, 715], [451, 722], [523, 718]],
  "#e800e8": [[613, 817], [623, 914], [638, 1012], [650, 1110]],
  "#2820f0": [[473, 862], [337, 1018], [197, 1170], [75, 1332]],
  "#c4ccf8": [[596, 712], [600, 735]],
};

const tri = (pts) => "M" + pts.map(([x, y]) => `${px(x)} ${py(y)}`).join("L") + "Z";

function Cie() {
  const ref = useRef(null);
  useLayoutEffect(() => paintLocus(ref.current), []);
  const tenths = [0, 1, 2, 3, 4, 5, 6, 7];
  return (
    <CieView>
      <canvas ref={ref} width={SIZE[0]} height={SIZE[1]} />
      <svg viewBox={`${ORIGIN[0]} ${ORIGIN[1]} ${SIZE[0]} ${SIZE[1]}`} preserveAspectRatio="none">
        <defs>
          <clipPath id="outside">
            <path clipRule="evenodd" d={`M1500 500H2560V1400H1500Z${tri(primaries)}`} />
          </clipPath>
          <linearGradient id="edge" x1="0" y1="0" x2="0" y2="1">
            <stop offset="0" stopColor="#008000" />
            <stop offset=".25" stopColor="#008810" />
            <stop offset=".3" stopColor="#008080" />
            <stop offset=".68" stopColor="#008080" />
            <stop offset=".73" stopColor="#000090" />
            <stop offset="1" stopColor="#000080" />
          </linearGradient>
        </defs>
        <g clipPath="url(#outside)" stroke="#3d4444" strokeWidth="2" opacity=".85">
          {tenths.map((n) => <path key={n} d={`M${px(n / 10)} 553V1335`} />)}
          {[1, 2, 3, 4, 5, 6, 7, 8, 9].map((n) => <path key={n} d={`M1517 ${py(n / 10)}H2524`} />)}
        </g>
        <path d={"M" + locus.join("L") + "Z"} fill="none" stroke="#d8960c" strokeWidth="2" />
        <path d={`M${px(0.3)} ${py(0.6)}L${px(0.15)} ${py(0.06)}`} stroke="url(#edge)" strokeWidth="5" />
        <path d={`M${px(0.15)} ${py(0.06)}L${px(0.64)} ${py(0.33)}`} stroke="#780040" strokeWidth="3" />
        <path d={`M${px(0.3)} ${py(0.6)}L${px(0.64)} ${py(0.33)}`} stroke="#707000" strokeWidth="3" />
        <path d={tri([[0.3086, 0.5907], [0.6446, 0.3278], [0.1561, 0.066]])} fill="none" stroke="#fff" strokeWidth="4" />
        <path d="M1950 560V1320M1524 1039H2518" stroke="#cfd4d4" strokeWidth="1" strokeDasharray="5 4" />
        <g stroke="#555c55" strokeWidth="1" strokeDasharray="5 5" fill="none">
          <path d="M1946 842L1956 1020M1960 1040L1966 1175M2065 905L1955 1035L1820 1190L1780 1240M1960 1039H2310" />
        </g>
        {waves.map(([nm, x, y, x1, y1, x2, y2]) => (
          <g key={nm}>
            <path d={`M${x1} ${y1}L${x2} ${y2}`} stroke="#a0a3b0" />
            <Wave x={x} y={y}>{nm} nm</Wave>
          </g>
        ))}
        {[1, 2, 3, 4, 5, 6, 7].map((n) => <Axis key={n} x={Math.round(px(n / 10)) + 2} y="1329">0.{n}</Axis>)}
        {[1, 2, 3, 4, 5, 6, 7, 8].map((n) => <Axis key={n} x="1520" y={Math.round(py(n / 10)) - 7}>0.{n}</Axis>)}
        {kelvins.map(([t, x, y]) => <Kelvin key={t} x={x} y={y}>{t}</Kelvin>)}
        <g transform="translate(1750 800) scale(.3333)">
          <path
            d="M388 915Q420 880 455 845T513 793Q560 757 600 728T671 677Q705 657 745 635T832 590Q870 571 920 552T1020 527Q1060 517 1098 512L1128 510"
            fill="none" stroke="#111" strokeWidth="5"
          />
          {[[513, 793], [671, 677], [832, 590], [1020, 527], [1098, 512]].map(([x, y]) => (
            <circle key={x} cx={x} cy={y} r="10" fill="#fff" stroke="#111" strokeWidth="4" />
          ))}
          {[[720, 662], [1050, 531]].map(([x, y]) => (
            <circle key={x} cx={x} cy={y} r="11" fill="#00e010" stroke="#064" strokeWidth="3" />
          ))}
          {Object.entries(squares).map(([c, list]) =>
            list.map(([x, y]) =>
              c === "none" ? (
                <g key={x + "," + y} fill="none">
                  <rect x={x - 25} y={y - 25} width="50" height="50" stroke="#d89a48" strokeWidth="5" />
                  <rect x={x - 20} y={y - 20} width="40" height="40" stroke="#e8d8b8" strokeWidth="5" />
                  <rect x={x - 15} y={y - 15} width="30" height="30" stroke="#77705a" strokeWidth="5" />
                </g>
              ) : (
                <g key={x + "," + y} fill="none">
                  <rect x={x - 22} y={y - 22} width="44" height="44" stroke={c} strokeWidth="9" />
                  <path d={`M${x - 27} ${y + 27}V${y - 27}H${x + 27}`} stroke="#101880" strokeWidth="4" />
                  <path d={`M${x - 27} ${y + 27}H${x + 27}V${y - 27}`} stroke="#e01040" strokeWidth="4" />
                </g>
              )
            )
          )}
          {Object.entries(points).map(([c, list]) =>
            list.map(([x, y]) => (
              <g key={x + "," + y}>
                <circle cx={x + 4} cy={y + 6} r="25" fill="#000" opacity=".28" />
                <circle
                  cx={x} cy={y} r="20" fill={c}
                  stroke={c === "#c4ccf8" ? "#000" : "#222"} strokeOpacity={c === "#c4ccf8" ? 1 : 0.65}
                  strokeWidth={c === "#c4ccf8" ? 9 : 5}
                />
                <ellipse cx={x} cy={y - 9} rx="11" ry="6" fill="#fff" opacity=".25" />
              </g>
            ))
          )}
        </g>
        <Credit x="2317" y="1258">hcfr.sourceforge.net</Credit>
      </svg>
    </CieView>
  );
}

function Target({ mini }) {
  if (mini)
    return (
      <TargetView $mini>
        <svg viewBox="0 0 143 110" preserveAspectRatio="none">
          <rect x="21" y="16" width="101" height="78" rx="9" stroke="#fff" />
          <g fill="none" stroke="#fff" strokeDasharray="4 3">
            <path d="M72 16V94M18 55H126" />
            <ellipse cx="72" cy="55" rx="27" ry="19" />
          </g>
        </svg>
      </TargetView>
    );
  return (
    <TargetView>
      <svg viewBox="0 0 1013 790" preserveAspectRatio="none">
        <defs>
          <linearGradient id="bubble">
            <stop offset="0" stopColor="#ffa500" />
            <stop offset="1" stopColor="#008080" />
          </linearGradient>
        </defs>
        <rect x="151" y="117" width="711" height="554" rx="12" stroke="#fff" strokeWidth="1" />
        <path d="M507 80V117M102 395H151M862 395H914M507 671V711" stroke="#222" fill="none" />
        <g fill="none" stroke="#fff" strokeDasharray="4 3">
          <path d="M507 80V711M102 395H914" />
          <ellipse cx="507" cy="395" rx="202" ry="157" />
        </g>
        <path d="M546 154H620V137H632V155Q631 163 622 165H579L564 185V165H554Q547 163 546 154Z" fill="#2cff1c" />
        <path d="M622 116Q632 120 632 130V137H622Z" fill="#e8e8f0" />
        <path d="M549 150H618V118Q628 120 628 128V152Q628 161 618 161H574L564 174V161H556Q549 159 549 150Z" fill="#063c10" opacity=".55" />
        <path d="M545 109H614Q622 109 624 118V146Q622 156 614 156H571L556 177V156H545Q537 155 536 146V118Q537 110 545 109Z" fill="url(#bubble)" stroke="#d8a030" />
        <BubbleText x="551" y="138">No data</BubbleText>
      </svg>
    </TargetView>
  );
}

function Levels() {
  return (
    <svg width="250" height="109" viewBox="0 0 250 109">
      <rect width="250" height="109" fill="#f0f0f0" />
      <path d="M0 57H250" stroke="#888" strokeDasharray="4 3" />
      {[["#a80000", 2, "0.0%", 10], ["#00a800", 66, "0.0%", 74], ["#0000a8", 130, "0.0%", 137], ["#b88a10", 194, "dE 0.0", 198]].map(([c, x, t, tx]) => (
        <g key={x}>
          <path d={`M${x} 103Q${x + 10} 97 ${x + 29} 97T${x + 58} 103Z`} fill={c} stroke="#000" />
          <LevelText x={tx} y="91">{t}</LevelText>
        </g>
      ))}
      <rect y="102" width="250" height="7" />
    </svg>
  );
}

/* ---------- sheet separators ---------- */

const Edge = ({ d, fill }) => (
  <svg width="17" height="37" viewBox="0 0 17 37">
    <path d="M0 1H17" stroke="#111" strokeWidth="2" />
    {fill && <path d={fill} fill="#fff" />}
    <path d={d} stroke="#222" fill="none" strokeWidth="1" />
  </svg>
);

export default function App() {
  return (
    <Window>
      <GlobalStyle />
      <Defs />
      <TitleBar>
        <Logo />
        <Title>HCFR Colorimeter - 3.5.1.4 - [HISENSE 55 U60G CINE CALIBRADO]</Title>
        <CaptionButton aria-label="Minimize"><svg width="12" height="12"><path d="M0 6h12" stroke="#000" /></svg></CaptionButton>
        <CaptionButton aria-label="Restore"><svg width="13" height="13"><path d="M1 3h9v9H1zM3 3V1h9v9h-2" fill="none" stroke="#000" /></svg></CaptionButton>
        <CaptionButton aria-label="Close"><svg width="13" height="13"><path d="M1 1l11 11M12 1L1 12" stroke="#000" /></svg></CaptionButton>
      </TitleBar>
      <MenuBar>
        <Grip $h={16} />
        <MenuLogo><Logo /></MenuLogo>
        {["File", "Edit", "View", "Measures", "Graphs", "Advanced", "Window", "Help"].map((m) => <MenuItem key={m}>{m}</MenuItem>)}
        <Spacer />
        <CaptionButton $small aria-label="Minimize child"><svg width="9" height="12"><path d="M0 9h9" stroke="#000" strokeWidth="3" /></svg></CaptionButton>
        <CaptionButton $small aria-label="Restore child"><svg width="12" height="12"><path d="M1 6h7v5H1zM4 5V1h7v6H8" fill="none" stroke="#000" strokeWidth="2" /></svg></CaptionButton>
        <CaptionButton $small aria-label="Close child"><svg width="11" height="11"><path d="M1 1l9 9M10 1L1 10" stroke="#000" strokeWidth="3" /></svg></CaptionButton>
      </MenuBar>
      <ToolBars>
        {toolbars.map((group, g) => (
          <ToolGroup key={g}>
            <ToolGrip $h={40} />
            {group.map((name, i) =>
              name === "|" ? <ToolSep key={i} /> : (
                <ToolButton key={i} $on={pressed.includes(name)} aria-label={name}>{icons[name]}</ToolButton>
              )
            )}
          </ToolGroup>
        ))}
      </ToolBars>

      <Workspace>
        <Form>
          <Row>
            <Panel title="View">
              <ViewBody>
                <SelectBox $w={248} $top={4}>
                  <SelectField $active aria-label="View"><option>Primaries and secondaries</option></SelectField>
                  <SelectArrow><Tri d={DOWN} /></SelectArrow>
                </SelectBox>
                <InfoLine>{"Color Space: HDTV Rec709 , White Point: D65, EOTF:  SDR, Power law (black compensation) w/gamma = 2.20, # of measures: 0 [13:26:48]"}</InfoLine>
                <Spin>
                  <SpinButton aria-label="Up"><Tri d={UP} w={7} h={5} /></SpinButton>
                  <SpinButton aria-label="Down"><Tri d={DOWN} w={7} h={5} /></SpinButton>
                </Spin>
              </ViewBody>
            </Panel>
            <Panel title="Sensor" width={387}>
              <DeviceBody>
                <DeviceText>Simulated sensor<br />Adaptive</DeviceText>
                <PlayButton $w={26} aria-label="Start"><svg width="26" height="26"><path d="M2 2l20 11L2 24z" fill="#86e65c" stroke="#58c038" /></svg></PlayButton>
                <IconButton $w={28} aria-label="Configure sensor"><SetupIcon /></IconButton>
              </DeviceBody>
            </Panel>
            <Panel title="Generator" width={153}>
              <DeviceBody>
                <DeviceText>GDI</DeviceText>
                <span />
                <IconButton $w={18} $drop={7} aria-label="Configure generator"><SetupIcon /></IconButton>
              </DeviceBody>
            </Panel>
            <Panel title="Parameters" width={192}>
              <CheckList>
                <Option><Check type="checkbox" />Reference</Option>
                <Option $off><Check type="checkbox" disabled />XYZ Adjustment</Option>
              </CheckList>
            </Panel>
          </Row>

          <Row>
            <Panel title=" ( Average dE: 0.83 [0.30,0.56,0.34] max: 1.37 [CIE2000] )" edge="#34c434" tight>
              <TableBody>
                <TableFrame>
                  <Clip>
                    <MainTable>
                      <colgroup>
                        <col width="67" />
                        {columns.map(([n, , w]) => <col key={n} width={w} />)}
                      </colgroup>
                      <thead>
                        <tr>
                          <HeadCell>Color</HeadCell>
                          {columns.map(([n, bg]) => <HeadCell key={n} $bg={bg}>{n}</HeadCell>)}
                        </tr>
                      </thead>
                      <tbody>
                        {rows.map(([label, bg, values]) => (
                          <tr key={label}>
                            <SideCell>{label}</SideCell>
                            {values.split(" ").map((v, i) => (
                              <Cell key={i} $bg={label === "Delta E" && !v ? "#e0e0e0" : bg} $strong={label === "Delta E"}>{v.replace("_", " ")}</Cell>
                            ))}
                          </tr>
                        ))}
                      </tbody>
                    </MainTable>
                  </Clip>
                  <ScrollTrack $pad="21px 0 24px"><Thumb $v /></ScrollTrack>
                  <ScrollTrack $justify="space-between" $pad="0 5px">
                    <Tri d={LEFT} w={9} h={11} fill="#a0a0a0" />
                    <Tri d={RIGHT} w={9} h={11} fill="#a0a0a0" />
                  </ScrollTrack>
                </TableFrame>
              </TableBody>
            </Panel>
            <DisplayColumn>
              <DisplayPanel>
                <Panel title="Display">
                  <RadioList>
                    {["Sensor", "RGB", "XYZ", "xyz", "xyY"].map((n) => (
                      <Option key={n} $off={n === "Sensor"} $lh={20} $gap={9}>
                        <Radio type="radio" name="display" disabled={n === "Sensor"} defaultChecked={n === "xyY"} />{n}
                      </Option>
                    ))}
                  </RadioList>
                </Panel>
              </DisplayPanel>
              <SideButton><Icon size={36}><Balls list={colorBalls} /></Icon>Go</SideButton>
              <SideButton>
                <Icon size={36}>
                  <path d="M3 4l34-2-6 34-14 3-8-4z" fill="#a8dcf8" stroke="#6ab0e0" />
                  <path d="M8 6l20 1-6 14-14-3z" fill="#e4f6ff" />
                  <path d="M18 22l5-9h6l4 6-4-1-2-2-4 7zM31 22l-4 10h-8l-1-6 4 2h2l3-5z" fill="#10a018" />
                </Icon>
                Delete
              </SideButton>
              <SideButton>
                <Icon size={36}>
                  <path d="M0 38V22l4-3v19z" fill="#4000a0" /><path d="M4 38V16l4-7 4 8v21z" fill="#0010ff" />
                  <path d="M11 38V15l4 5v18z" fill="#00d8f0" /><path d="M15 38V20l4-3v21z" fill="#00f020" />
                  <path d="M18 38V12l4-8 5 5v29z" fill="#ffff00" /><path d="M26 38V9l5 11v18z" fill="#900000" />
                  <path d="M30 38V18l5-1 5 4v17z" fill="#ff0000" />
                </Icon>
                Refs
              </SideButton>
              <EditOption $lh={22} $gap={9}><Check type="checkbox" />Edit</EditOption>
            </DisplayColumn>
          </Row>

          <Row $grow>
            <Panel title="Selected color" width={479}>
              <SelectedBody>
                <LeftStack>
                  <Caption $m="3px 0 10px">RGB Levels</Caption>
                  <Levels />
                  <CompareBox><span>Measure</span><span>Reference</span></CompareBox>
                  <Caption $m="18px 0 0">Target</Caption>
                  <Target mini />
                </LeftStack>
                <MeasureStack>
                  <MeasureTitle>Current Measure</MeasureTitle>
                  <GridFrame>
                    <MeasureTable>
                      <colgroup><col width="72" /><col width="92" /></colgroup>
                      <tbody>
                        {measureRows.map((m, i) => (
                          <tr key={i}>
                            <MiniHead>{m}</MiniHead>
                            <MiniCell $bg={Math.floor(i / 3) % 2 ? "#e0e0e0" : "#fff"} />
                          </tr>
                        ))}
                      </tbody>
                    </MeasureTable>
                    <ArrowTrack $column $justify="space-between" $pad="7px 0 6px">
                      <Tri d={UP} w={11} h={9} fill="#a0a0a0" />
                      <Tri d={DOWN} w={11} h={9} fill="#a0a0a0" />
                    </ArrowTrack>
                  </GridFrame>
                </MeasureStack>
              </SelectedBody>
            </Panel>
            <Panel title="Information">
              <InfoBody>
                <SelectBox $w={377}>
                  <SelectField aria-label="Information view"><option>Target - CIE</option></SelectField>
                  <SelectArrow><Tri d={DOWN} /></SelectArrow>
                </SelectBox>
                <Views>
                  <Target />
                  <Cie />
                </Views>
              </InfoBody>
            </Panel>
          </Row>
        </Form>
        <ScrollTrack $pad="20px 0 55px"><Thumb $v /></ScrollTrack>
        <ScrollTrack $pad="0 76px 0 24px"><Thumb /></ScrollTrack>
        <ScrollTrack />
      </Workspace>

      <Sheets>
        <ArrowSet>
          <SheetArrow aria-label="Close sheet"><svg width="11" height="11"><path d="M1 1l9 9M10 1L1 10" stroke="#111" strokeWidth="2" /></svg></SheetArrow>
          <SheetArrow aria-label="Previous sheet"><Tri d={LEFT} w={6} h={8} /></SheetArrow>
          <SheetArrow aria-label="Next sheet"><Tri d={RIGHT} w={6} h={8} /></SheetArrow>
        </ArrowSet>
        <Edge d="M0 0L17 37" fill="M0 0H17V37Z" />
        <Sheet $on>Measures</Sheet>
        <Edge d="M0 37L17 0M8 19L16 37" fill="M0 0H17L0 37Z" />
        <Sheet>Luminance</Sheet>
        <Edge d="M0 0L17 37M8 19L0 37" />
        <Sheet>Gamma</Sheet>
        <Edge d="M0 0L17 37M8 19L0 37" />
        <Sheet>RGB Levels</Sheet>
        <Edge d="M0 37L17 0" />
        <Spacer />
        <SheetTools>
          <svg width="19" height="18" viewBox="0 0 19 18">
            <path d="M1 1h16v11l-3 5h-3l-2-3-2 3H4l-3-6z" fill="#6c6410" stroke="#221" />
            <path d="M4 3h9v7H4z" fill="#fff" /><path d="M5 9l4-4 3-1v5z" fill="#f02020" /><path d="M10 11h7l-1 5h-4z" fill="#ffe820" />
          </svg>
          <SmallOption $gap={8}><Check type="checkbox" />Reference</SmallOption>
        </SheetTools>
      </Sheets>
      <StatusBar>
        Ready
        <Spacer />
        <Pane $w={94} /><Pane $w={35} /><Pane $w={41}>NUM</Pane><Pane $w={41} />
      </StatusBar>
    </Window>
  );
}
